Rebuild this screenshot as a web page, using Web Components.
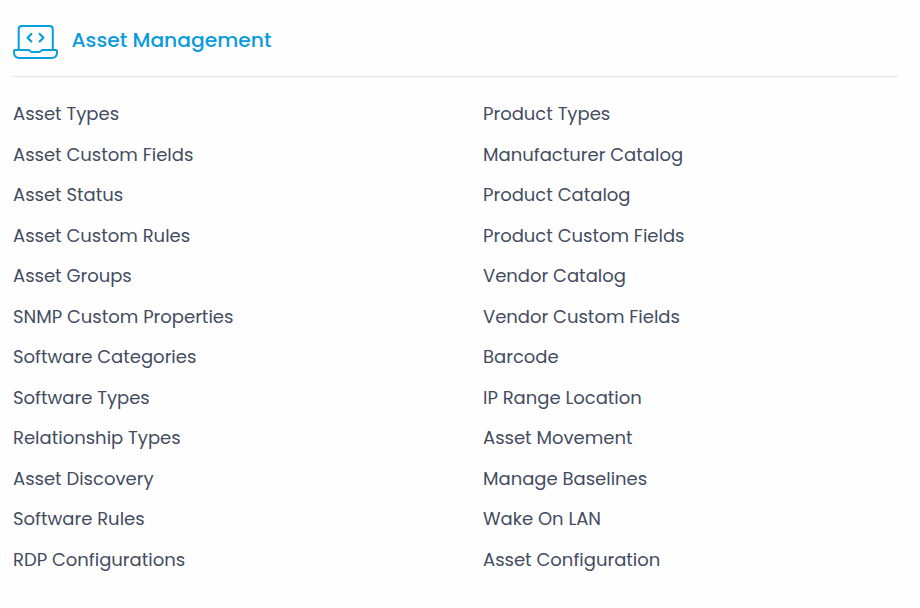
<!DOCTYPE html>
<html lang="en">
<head>
<meta charset="utf-8">
<title>Asset Management</title>
<style>
    body {
        margin: 0;
        background: #fefefe;
        font-family: Poppins, Inter, "Open Sans", sans-serif;
        color: #434c60;
    }
</style>
</head>
<body>
<settings-card>
    <laptop-icon slot="icon"></laptop-icon>
    <span slot="title">Asset Management</span>
    <link-list>
        <link-item>Asset Types</link-item>
        <link-item>Asset Custom Fields</link-item>
        <link-item>Asset Status</link-item>
        <link-item>Asset Custom Rules</link-item>
        <link-item>Asset Groups</link-item>
        <link-item>SNMP Custom Properties</link-item>
        <link-item>Software Categories</link-item>
        <link-item>Software Types</link-item>
        <link-item>Relationship Types</link-item>
        <link-item>Asset Discovery</link-item>
        <link-item>Software Rules</link-item>
        <link-item>RDP Configurations</link-item>
    </link-list>
    <link-list>
        <link-item>Product Types</link-item>
        <link-item>Manufacturer Catalog</link-item>
        <link-item>Product Catalog</link-item>
        <link-item>Product Custom Fields</link-item>
        <link-item>Vendor Catalog</link-item>
        <link-item>Vendor Custom Fields</link-item>
        <link-item>Barcode</link-item>
        <link-item>IP Range Location</link-item>
        <link-item>Asset Movement</link-item>
        <link-item>Manage Baselines</link-item>
        <link-item>Wake On LAN</link-item>
        <link-item>Asset Configuration</link-item>
    </link-list>
</settings-card>

<script>
class linkItem extends HTMLElement {
    constructor() {
        super();
        this.shadowDOM = this.attachShadow({mode:"open"})
    }

    connectedCallback() {
        this.shadowDOM.innerHTML = `
        <style>
        :host {
            display: flex;
            align-items: center;
            height: 40.5px;
            font-size: 18px;
            line-height: 27px;
        }

        span {
            cursor: pointer;
        }

        span:hover {
            color: #0095da;
        }
        </style>
        <span><slot></slot></span>`
    }
}

class linkList extends HTMLElement {
    constructor() {
        super();
        this.shadowDOM = this.attachShadow({mode:"open"})
    }

    connectedCallback() {
        this.shadowDOM.innerHTML = `
        <style>
        :host {
            display: flex;
            flex-direction: column;
        }
        </style>
        <slot></slot>`
    }
}

class laptopIcon extends HTMLElement {
    constructor() {
        super();
        this.shadowDOM = this.attachShadow({mode:"open"})
    }

    connectedCallback() {
        this.shadowDOM.innerHTML = `
        <style>
        :host {
            display: block;
            width: 45px;
            height: 34px;
        }

        svg {
            display: block;
        }
        </style>
        <svg width="45" height="34" viewBox="0 0 45 34" fill="none" stroke="#079fdd" stroke-width="2" stroke-linecap="round" stroke-linejoin="round">
            <path d="M5.7 24.5V4.2Q5.7 1 8.9 1H36.6Q39.8 1 39.8 4.2V24.5"/>
            <path d="M2 25H15.4Q16.4 25 17 26Q17.6 27 18.8 27H26.2Q27.4 27 28 26Q28.6 25 29.6 25H43Q44 25 44 26V27.5Q44 33 38.5 33H6.5Q1 33 1 27.5V26Q1 25 2 25Z"/>
            <path d="M18.3 8.9L14.6 12.7L18.3 16.5M26.7 8.9L30.4 12.7L26.7 16.5" stroke-width="2.2"/>
        </svg>`
    }
}

class settingsCard extends HTMLElement {
    constructor() {
        super();
        this.shadowDOM = this.attachShadow({mode:"open"})
    }

    connectedCallback() {
        this.shadowDOM.innerHTML = `
        <style>
        :host {
            display: block;
            box-sizing: border-box;
            height: 608px;
            padding: 0 22px 0 12px;
            border-left: 1px solid #fafafa;
            background-color: #fefefe;
        }

        .header {
            display: flex;
            align-items: center;
            gap: 13.5px;
            box-sizing: border-box;
            height: 77px;
            padding-top: 8px;
            border-bottom: 1px solid #dfe4ef;
        }

        .title {
            color: #0a9bdc;
            font-size: 20.25px;
            font-weight: 500;
            line-height: 30px;
            padding-bottom: 4px;
        }

        .columns {
            display: grid;
            grid-template-columns: 470px 1fr;
            padding-top: 16.5px;
        }
        </style>
        <div class="header">
            <slot name="icon"></slot>
            <div class="title"><slot name="title"></slot></div>
        </div>
        <div class="columns"><slot></slot></div>`
    }
}

customElements.define("settings-card", settingsCard);
customElements.define("link-item", linkItem);
customElements.define("link-list", linkList);
customElements.define("laptop-icon", laptopIcon);
</script>
</body>
</html>
